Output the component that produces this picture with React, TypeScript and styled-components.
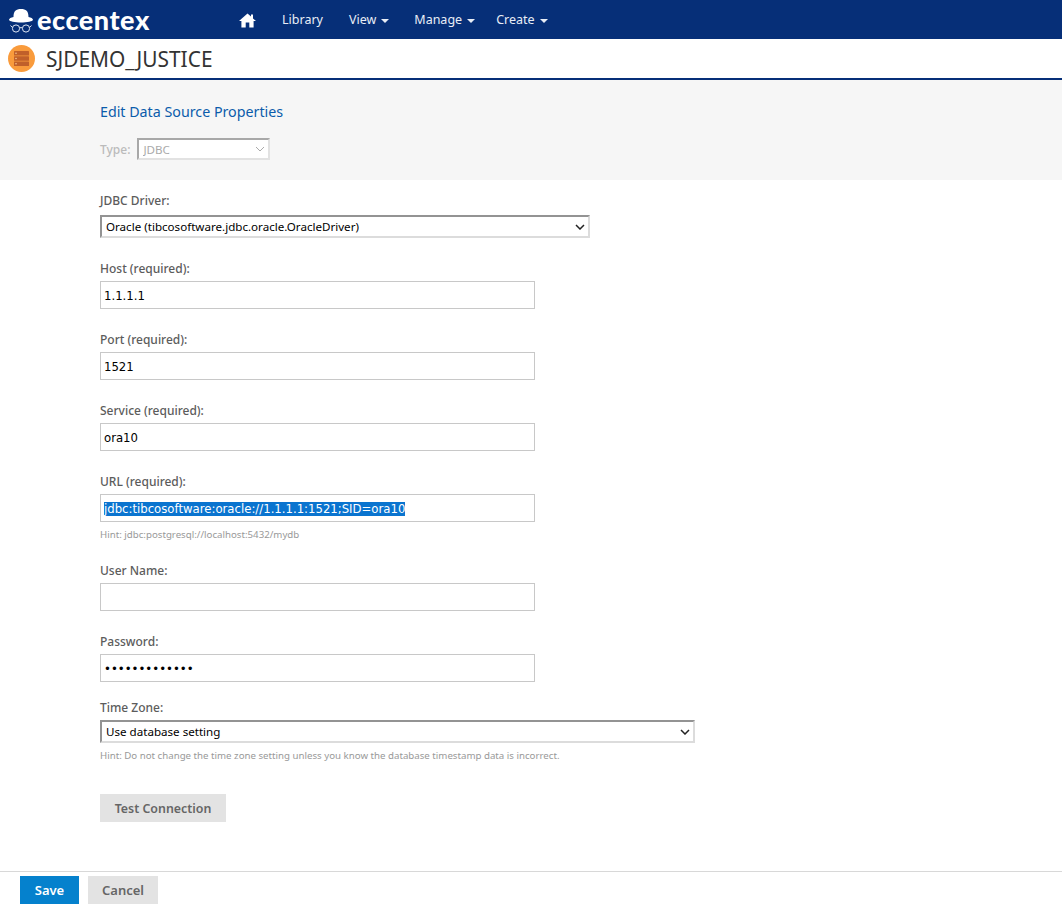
import { useEffect, useRef } from 'react';
import styled, { createGlobalStyle } from 'styled-components';

const chevron = (color: string, stroke: number) =>
  `url("data:image/svg+xml,%3Csvg xmlns='http://www.w3.org/2000/svg' width='10' height='6' viewBox='0 0 10 6'%3E%3Cpath d='M1 1 L5 5 L9 1' fill='none' stroke='${color}' stroke-width='${stroke}'/%3E%3C/svg%3E")`;

const GlobalStyle = createGlobalStyle`
  html, body { margin: 0; padding: 0; background: #fff; }
  body { font-family: "Noto Sans", "Liberation Sans", sans-serif; }
  ::selection { background: #0a74cf; color: #fff; }
`;

const Page = styled.div`
  width: 1062px;
  height: 915px;
  display: flex;
  flex-direction: column;
  overflow: hidden;
`;

const NavBar = styled.nav`
  height: 39px;
  background: #062f78;
  display: flex;
  align-items: center;
  flex: none;
`;

const Brand = styled.div`
  width: 238px;
  padding-left: 8px;
  box-sizing: border-box;
  display: flex;
  align-items: center;
  gap: 3px;
  color: #fff;
  font: 900 27px/39px Lato, sans-serif;
  letter-spacing: 0.55px;
`;

const NavItems = styled.div`
  display: flex;
  align-items: center;
  padding-top: 1px;
`;

const NavLink = styled.a<{ $gap: number }>`
  color: #e8edf6;
  font-size: 12.5px;
  line-height: 38px;
  margin-right: ${p => p.$gap}px;
  display: flex;
  align-items: center;
`;

const HomeLink = styled(NavLink)`
  margin-left: 1px;
`;

const Caret = styled.span`
  display: inline-block;
  margin-left: 5px;
  margin-top: 2px;
  border-top: 4px solid #e8edf6;
  border-left: 4px solid transparent;
  border-right: 4px solid transparent;
`;

const TitleBar = styled.header`
  height: 39px;
  flex: none;
  display: flex;
  align-items: center;
  gap: 11px;
  padding-left: 8px;
  border-bottom: 2px solid #062f78;
`;

const Title = styled.h1`
  margin: 0;
  font-size: 20.9px;
  font-weight: 400;
  color: #333;
`;

const PropsPanel = styled.section`
  height: 100px;
  flex: none;
  box-sizing: border-box;
  background: #f6f6f6;
  padding: 22px 0 0 100px;
`;

const PanelHeading = styled.h2`
  margin: 0 0 16px;
  font-size: 14.25px;
  line-height: 20px;
  font-weight: 400;
  color: #0b5cab;
`;

const TypeRow = styled.div`
  display: flex;
  align-items: center;
  gap: 7px;
`;

const TypeLabel = styled.label`
  font-size: 12px;
  font-weight: 500;
  color: #bbb;
`;

const NativeSelect = styled.select<{ $width: number }>`
  appearance: none;
  width: ${p => p.$width}px;
  height: 23px;
  box-sizing: border-box;
  border-style: solid;
  border-width: 2px;
  border-color: #939393 #dcdcdc #dcdcdc #939393;
  border-radius: 0;
  background: #fff ${chevron('%23222', 1.5)} no-repeat right 3px center;
  color: #000;
  font: 11.6px "Noto Sans", sans-serif;
  padding: 0 0 0 4px;
  outline: none;
  display: block;
`;

const TypeSelect = styled(NativeSelect)`
  height: 22px;
  border-color: #a8a8a8 #e2e2e2 #e2e2e2 #a8a8a8;
  background-image: ${chevron('%23aaa', 1)};
  color: #aaa;
  opacity: 1;
`;

const Form = styled.form`
  flex: 1;
  padding: 12px 0 0 100px;
  display: flex;
  flex-direction: column;
`;

const Field = styled.div<{ $gap?: number }>`
  margin-bottom: ${p => p.$gap ?? 22}px;
`;

const FieldLabel = styled.label<{ $gap?: number }>`
  display: block;
  height: 17px;
  font-size: 12px;
  line-height: 17px;
  font-weight: 500;
  color: #5c5c5c;
  margin-bottom: ${p => p.$gap ?? 4}px;
`;

const TextInput = styled.input`
  display: block;
  width: 435px;
  height: 28px;
  box-sizing: border-box;
  border: 1px solid #c8c8c8;
  border-radius: 0;
  padding: 2px 3px 0;
  outline: none;
  background: #fff;
  color: #000;
  font: 11.7px "DejaVu Sans", sans-serif;
`;

const Hint = styled.div<{ $top: number }>`
  font-size: 9.7px;
  line-height: 14px;
  color: #999;
  margin-top: ${p => p.$top}px;
`;

const Button = styled.button<{ $primary?: boolean; $width: number }>`
  width: ${p => p.$width}px;
  height: 28px;
  border: 0;
  border-radius: 0;
  padding: 0;
  font: 600 13px "Noto Sans", sans-serif;
  background: ${p => (p.$primary ? '#0581cd' : '#e3e3e3')};
  color: ${p => (p.$primary ? '#fff' : '#666')};
`;

const TestButton = styled(Button)`
  align-self: flex-start;
  font-size: 12.4px;
`;

const Footer = styled.footer`
  height: 44px;
  flex: none;
  box-sizing: border-box;
  border-top: 1px solid #d8d8d8;
  padding: 4px 0 0 20px;
  display: flex;
  align-items: flex-start;
  gap: 9px;
`;

const HatLogo = () => (
  <svg width="26" height="31" viewBox="0 0 26 31" aria-hidden="true">
    <path d="M5.5 13 C5.5 7 8 5 13 5 C18 5 20.5 7 20.5 13 C23 13.5 25 14.5 25 15.8 C25 17.5 19 18.5 13 18.5 C7 18.5 1 17.5 1 15.8 C1 14.5 3 13.5 5.5 13 Z" fill="#fff" />
    <g fill="none" stroke="#dfe6f2" strokeWidth="1">
      <circle cx="8" cy="24.5" r="3.6" />
      <circle cx="18" cy="24.5" r="3.6" />
      <path d="M11.6 24 Q13 23 14.4 24 M4.4 23.5 L2.5 21.5 M21.6 23.5 L23.5 21.5" />
    </g>
  </svg>
);

const HomeIcon = () => (
  <svg width="17" height="15" viewBox="0 0 17 15" aria-hidden="true">
    <path d="M8.5 0.5 L12 3.6 V1.5 H14 V5.4 L17 8 H14.6 V14.5 H10.3 V9.6 H6.7 V14.5 H2.4 V8 H0 Z" fill="#fff" />
  </svg>
);

const SourceBadge = () => (
  <svg width="27" height="27" viewBox="0 0 27 27" aria-hidden="true">
    <circle cx="13.5" cy="13.5" r="13.5" fill="#f99b3c" />
    <g fill="#c0602a">
      <rect x="6" y="6" width="15" height="4.4" rx="0.5" />
      <rect x="6" y="11.3" width="15" height="4.4" rx="0.5" />
      <rect x="6" y="16.6" width="15" height="4.4" rx="0.5" />
    </g>
    <g fill="#ffd9a8">
      <circle cx="8" cy="8.2" r="0.7" />
      <circle cx="8" cy="13.5" r="0.7" />
      <circle cx="8" cy="18.8" r="0.7" />
    </g>
  </svg>
);

const App = () => {
  const urlRef = useRef<HTMLInputElement>(null);

  useEffect(() => {
    urlRef.current?.focus();
    urlRef.current?.select();
  }, []);

  return (
    <Page>
      <GlobalStyle />
      <NavBar>
        <Brand>
          <HatLogo />
          eccentex
        </Brand>
        <NavItems>
          <HomeLink $gap={26}><HomeIcon /></HomeLink>
          <NavLink $gap={26}>Library</NavLink>
          <NavLink $gap={25}>View<Caret /></NavLink>
          <NavLink $gap={21}>Manage<Caret /></NavLink>
          <NavLink $gap={0}>Create<Caret /></NavLink>
        </NavItems>
      </NavBar>
      <TitleBar>
        <SourceBadge />
        <Title>SJDEMO_JUSTICE</Title>
      </TitleBar>
      <PropsPanel>
        <PanelHeading>Edit Data Source Properties</PanelHeading>
        <TypeRow>
          <TypeLabel>Type:</TypeLabel>
          <TypeSelect $width={133} disabled defaultValue="JDBC">
            <option>JDBC</option>
          </TypeSelect>
        </TypeRow>
      </PropsPanel>
      <Form>
        <Field $gap={22}>
          <FieldLabel $gap={6}>JDBC Driver:</FieldLabel>
          <NativeSelect $width={490} defaultValue="oracle">
            <option value="oracle">Oracle (tibcosoftware.jdbc.oracle.OracleDriver)</option>
          </NativeSelect>
        </Field>
        <Field>
          <FieldLabel>Host (required):</FieldLabel>
          <TextInput defaultValue="1.1.1.1" />
        </Field>
        <Field>
          <FieldLabel>Port (required):</FieldLabel>
          <TextInput defaultValue="1521" />
        </Field>
        <Field>
          <FieldLabel>Service (required):</FieldLabel>
          <TextInput defaultValue="ora10" />
        </Field>
        <Field $gap={20}>
          <FieldLabel>URL (required):</FieldLabel>
          <TextInput ref={urlRef} defaultValue="jdbc:tibcosoftware:oracle://1.1.1.1:1521;SID=ora10" />
          <Hint $top={6}>Hint: jdbc:postgresql://localhost:5432/mydb</Hint>
        </Field>
        <Field>
          <FieldLabel>User Name:</FieldLabel>
          <TextInput />
        </Field>
        <Field $gap={17}>
          <FieldLabel>Password:</FieldLabel>
          <TextInput type="password" defaultValue="1234567890123" />
        </Field>
        <Field $gap={31}>
          <FieldLabel>Time Zone:</FieldLabel>
          <NativeSelect $width={595} defaultValue="db">
            <option value="db">Use database setting</option>
          </NativeSelect>
          <Hint $top={6}>Hint: Do not change the time zone setting unless you know the database timestamp data is incorrect.</Hint>
        </Field>
        <TestButton $width={126} type="button">Test Connection</TestButton>
      </Form>
      <Footer>
        <Button $primary $width={59} type="button">Save</Button>
        <Button $width={70} type="button">Cancel</Button>
      </Footer>
    </Page>
  );
};

export default App;
